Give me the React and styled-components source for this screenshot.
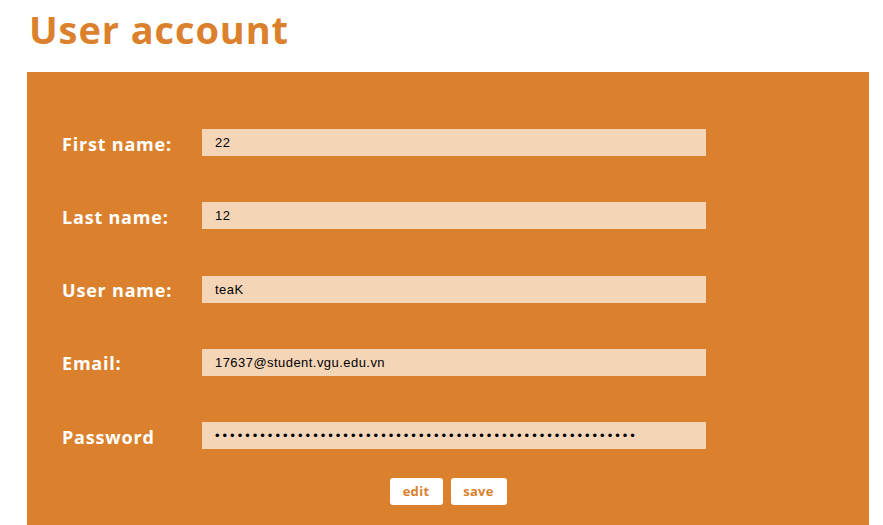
import React from "react";
import styled, { createGlobalStyle } from "styled-components";

const Global = createGlobalStyle`
  html, body { margin: 0; padding: 0; background: #ffffff; }
  body { font-family: "Open Sans", "Liberation Sans", sans-serif; }
`;

const Page = styled.div`
  padding: 0 14px 0 27px;
`;

const Title = styled.h1`
  margin: 0;
  height: 72px;
  box-sizing: border-box;
  padding: 3px 0 0 2px;
  font-family: "Open Sans", sans-serif;
  font-weight: 700;
  font-size: 38px;
  line-height: 52px;
  color: #db812e;
  letter-spacing: 0.9px;
`;

const Panel = styled.form`
  background: #db812e;
  height: 453px;
  box-sizing: border-box;
  padding: 57px 35px 0 35px;
  display: flex;
  flex-direction: column;
`;

const Fields = styled.div`
  display: flex;
  flex-direction: column;
  gap: 46.25px;
`;

const Row = styled.div`
  display: grid;
  grid-template-columns: 140px 504px;
  align-items: center;
  height: 27px;
`;

const Label = styled.label`
  font-family: "Open Sans", sans-serif;
  font-weight: 700;
  font-size: 18px;
  color: #ffffff;
  letter-spacing: 0.8px;
  padding-top: 2px;
`;

const Input = styled.input`
  box-sizing: border-box;
  height: 27px;
  width: 504px;
  border: none;
  outline: none;
  background: #f4d5b8;
  padding: 0 13px;
  font-family: "Liberation Sans", sans-serif;
  font-size: 13px;
  color: #000000;
  letter-spacing: ${(p) => (p.type === "password" ? "3px" : "0.45px")};
`;

const Actions = styled.div`
  display: flex;
  justify-content: center;
  gap: 8px;
  margin-top: 29px;
`;

const Button = styled.button`
  height: 27px;
  width: ${(p) => p.w}px;
  border: none;
  border-radius: 3px;
  background: #ffffff;
  color: #db812e;
  font-family: "Open Sans", sans-serif;
  font-weight: 700;
  font-size: 13px;
  letter-spacing: 0.3px;
  padding: 0 0 2px;
  cursor: pointer;
`;

const fields = [
  { label: "First name:", value: "22", type: "text" },
  { label: "Last name:", value: "12", type: "text" },
  { label: "User name:", value: "teaK", type: "text" },
  { label: "Email:", value: "17637@student.vgu.edu.vn", type: "text" },
  { label: "Password", value: "x".repeat(56), type: "password" },
];

export default function App() {
  return (
    <Page>
      <Global />
      <Title>User account</Title>
      <Panel onSubmit={(e) => e.preventDefault()}>
        <Fields>
          {fields.map((f) => (
            <Row key={f.label}>
              <Label>{f.label}</Label>
              <Input type={f.type} defaultValue={f.value} readOnly />
            </Row>
          ))}
        </Fields>
        <Actions>
          <Button type="button" w={53}>edit</Button>
          <Button type="button" w={56}>save</Button>
        </Actions>
      </Panel>
    </Page>
  );
}
